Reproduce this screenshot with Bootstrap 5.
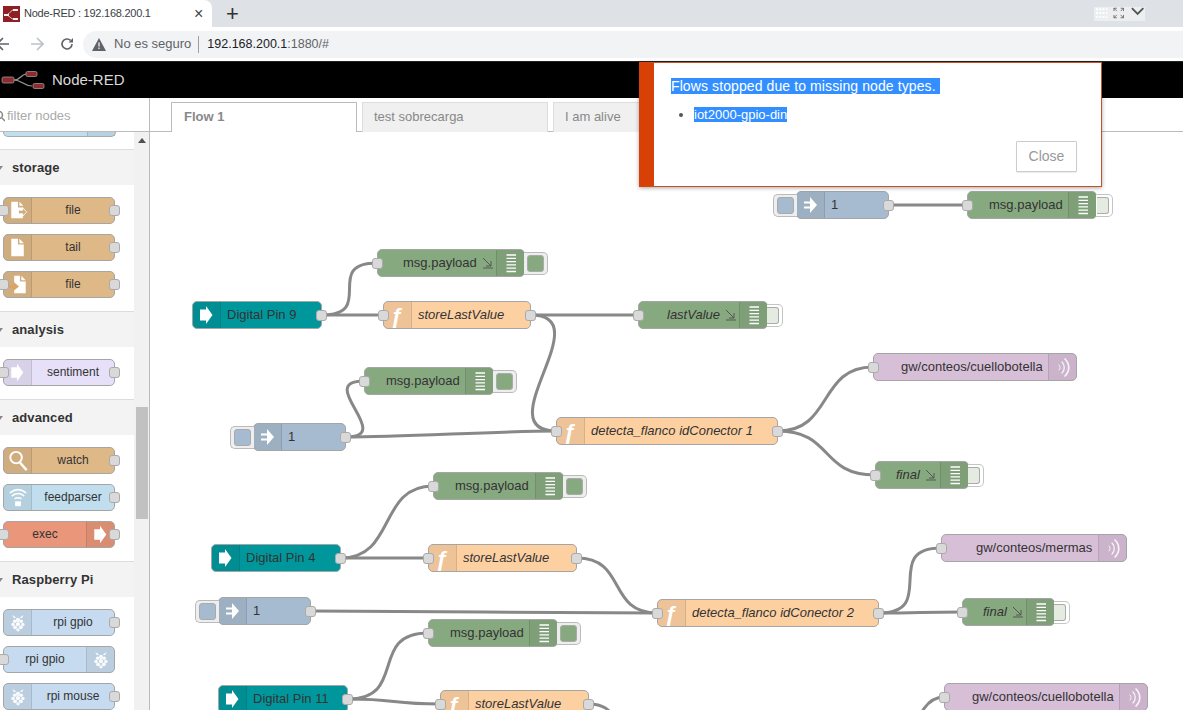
<!DOCTYPE html>
<html lang="es">
<head>
<meta charset="utf-8">
<title>Node-RED : 192.168.200.1</title>
<link href="https://cdn.jsdelivr.net/npm/bootstrap@5.3.0/dist/css/bootstrap.min.css" rel="stylesheet">
<style>
html,body{height:710px;overflow:hidden}
body{font-family:"Liberation Sans",Arial,sans-serif;font-size:13px;color:#333;background:#fff}
.shell{height:710px}
.br-tabs{height:27px;background:#dee1e6;flex:none}
.br-tab{width:212px;height:27px;background:#fff;border-top-right-radius:8px;padding-left:3px;font-size:11px;letter-spacing:-.25px;color:#3c4043}
.br-tab .ttl{margin-left:4px;width:170px}
.br-x{font-size:16px;color:#444;line-height:1}
.br-plus{font-size:22px;color:#333;line-height:1;margin-left:14px;font-weight:400}
.win-ctl{width:51px;height:14px;background:#eceef0;gap:5px;margin-right:38px;padding-left:1px}
.br-bar{height:34px;background:#fff;flex:none}
.br-navs{width:83px;flex:none}
.omni{height:27px;background:#f1f3f4;border-radius:14px 0 0 14px;padding-left:9px;font-size:13px;color:#5f6368}
.omni .sep{width:1px;height:17px;background:#9aa0a6;margin:0 8px 0 7px}
.omni .url{font-size:12.5px}
.omni .host{color:#202124}
.nr-head{height:37px;background:#000;color:#d9d9d9;font-size:15px;flex:none;padding-left:1px;border-top:1px solid #222}
.nr-head svg{margin-right:7px}
.nr-main{min-height:0}
.palette{width:150px;flex:none;border-right:1px solid #bbb;background:#fff}
.pal-filter{height:34px;flex:none;border-bottom:1px solid #bbb;color:#aaa;font-size:13px;padding:3px 0 0 7px;position:relative}
.pal-filter svg{position:absolute;left:-7px;top:12px}
.pal-body{min-height:0}
.pal-list{width:134px;flex:none;overflow:hidden}
.pal-bar{width:15px;flex:none;background:#f1f1f1}
.pal-arrow{width:0;height:0;border:4px solid transparent;border-top:0;border-bottom:5px solid #505050;margin:6px auto 0}
.pal-thumb{width:12px;height:112px;background:#c1c1c1;margin:264px auto 0}
.pal-stub{height:5px;margin:0 18px -1px 3px;background:#c0deed;border:1px solid #aaa;border-top:0;border-radius:0 0 5px 5px;display:flex;justify-content:flex-end}
.pal-stub i{width:28px;background:rgba(0,0,0,.05);border-left:1px solid rgba(0,0,0,.12)}
.pal-cat{height:36px;background:#f3f3f3;border-top:1px solid #ddd;margin-top:13px;font-weight:700;font-size:13px;color:#333;padding-left:12px;letter-spacing:.1px;position:relative}
.pal-cat::before{content:"";position:absolute;left:-3px;top:16px;border:3px solid transparent;border-top:4px solid #888;border-bottom:0}
.pal-items{padding:12px 0 0 3px;display:flex;flex-direction:column;gap:10px}
.pal-items .rn{width:112px;height:27px;font-size:12px;position:relative;text-align:center}
.pal-items .rn .lbl{flex:1;padding:0;text-align:center;line-height:25px}
.pal-items .ic svg{height:25px}
.rn{display:flex;border:1px solid #a5a5a5;border-radius:5px;color:#333;white-space:nowrap}
.abs{position:absolute;height:28px;z-index:2;font-size:13px}
.abs .lbl{line-height:26px;flex:1;overflow:visible}
.ic{width:28px;flex:none;background:rgba(0,0,0,.06);border-right:1px solid rgba(0,0,0,.1);display:flex;align-items:center;justify-content:center;border-radius:4px 0 0 4px}
.ic.rt{border-right:0;border-left:1px solid rgba(0,0,0,.1);border-radius:0 4px 4px 0}
.ic svg{width:26px;height:26px;display:block}
.ffn{color:#fff;font-size:22px;font-weight:700;line-height:25px;margin-left:-1px}
.pt{position:absolute;top:50%;width:11px;height:11px;margin-top:-5.5px;background:#d9d9d9;border:1px solid #aaa;border-radius:3px;z-index:3}
.pt.l{left:-6px}.pt.r{right:-6px}
.c-file{background:#deb887}.c-sent{background:#e6e0f8}.c-feed{background:#c0deed}.c-exec{background:#e9967a}.c-rpi{background:#c6dbef}
.c-inj{background:#a6bbcf}.c-dbg{background:#87a980}.c-fn{background:#fdd0a2}.c-mq{background:#d8bfd8}.c-pin{background:#00979c}
.nbtn{position:absolute;top:2px;height:23px;background:#eee;border:1px solid #bbb;display:flex;align-items:center}
.nbtn i{display:block;height:17px;border-radius:3px;border:1px solid #aaa}
.nbtn.rb{left:100%;border-left:0;border-radius:0 5px 5px 0;justify-content:flex-end;padding-right:3px}
.nbtn.lb{right:100%;border-right:0;border-radius:5px 0 0 5px;padding-left:3px}
.nbtn.off{background:#fff;border-color:#c4c4c4}
.nbtn.off i{background:#e4ebe1;border-left:0;border-radius:0 3px 3px 0}
.chg{display:inline-block;vertical-align:-2px;margin-left:5px}
.wk-tabs{height:34px;flex:none;background:#fff;border-bottom:1px solid #bbb;padding:4px 0 0 21px;gap:5px;display:flex;flex-wrap:nowrap}
.wk-tab{width:186px;height:30px;background:#f0f0f0;border:1px solid #ddd;border-bottom:0;color:#888;padding:0 11px;line-height:27px;font-size:13px}
.wk-tab.on{background:#fff;border-color:#bbb;font-weight:700;position:relative;z-index:1;padding-left:12px}
.canvas{position:relative;overflow:hidden;background:#fff}
.wires{position:absolute;left:0;top:0;width:1033px;height:578px;z-index:1}
.wires path{fill:none;stroke:#888;stroke-width:3}
.nr-alert{position:absolute;left:639px;top:62px;width:463px;height:125px;background:#fff;border:1px solid #c7502a;border-left:15px solid #d74108;box-shadow:0 1px 4px rgba(0,0,0,.35);z-index:20;padding:14px 16px 0 17px;font-size:14px;color:#555}
.nr-alert .sel{background:#338fff;color:#fff}
.nr-alert .top-msg{line-height:19px;letter-spacing:.1px}
.nr-alert ul{margin:9px 0 0;padding-left:23px;line-height:19px;font-size:13px}
.nr-alert .btn-wrap{position:absolute;right:24px;top:78px}
.nr-close{width:61px;height:31px;padding:0;background:#fff;border:1px solid #ccc;border-radius:1px;color:#999;font-size:14px;box-shadow:0 1px 1px rgba(0,0,0,.08)}
</style>
</head>
<body>
<svg width="0" height="0" class="position-absolute">
<defs>
<symbol id="i-arrow" viewBox="0 0 26 26"><path d="M6 7.500h6V4l6.500 9-6.500 9v-3.500H6z" fill="#fff"/></symbol>
<symbol id="i-inj" viewBox="0 0 26 26"><path d="M6 9.500h6V5l7 8-7 8v-4.500H6v-2h6v-3H6z" fill="#fff"/></symbol>
<symbol id="i-dbg" viewBox="0 0 26 26"><path d="M8.500 5h9.500M8.500 8.300h9.500M8.500 11.600h9.500M8.500 14.900h9.500M8.500 18.200h9.500M8.500 21.500h9.500" stroke="#fff" stroke-width="1.300" fill="none"/></symbol>
<symbol id="i-mq" viewBox="0 0 26 26" ><g fill="none" stroke="#fff" stroke-linecap="round" opacity=".85"><path d="M9 11c1.500 1.500 1.500 3.500 0 5" stroke-width="1"/><path d="M12 8c3 3 3 8 0 11" stroke-width="1.300"/><path d="M15 5c5 5 5 12 0 17" stroke-width="1.700"/></g></symbol>
<symbol id="i-file-in" viewBox="0 0 26 26"><path d="M6 4h7v6h5v3h-4v3h4v5H6z" fill="#fff"/><path d="M14.500 4l4 4h-4z" fill="#fff"/><path d="M15 12.500h3V10l4 4.500-4 4.500v-2.500h-3" fill="none" stroke="#fff" stroke-width=".8"/></symbol>
<symbol id="i-file" viewBox="0 0 26 26"><path d="M6 4h7v6h6v12H6z" fill="#fff"/><path d="M14.500 4l4.500 4.500h-4.500z" fill="#fff"/></symbol>
<symbol id="i-file-out" viewBox="0 0 26 26"><path d="M9 4h6v6h6v12H9z" fill="#fff"/><path d="M16.500 4l4.500 4.500h-4.500z" fill="#fff"/><path d="M3 13.500h5V10l6 5-6 5v-3H3z" fill="#d9a566"/></symbol>
<symbol id="i-watch" viewBox="0 0 26 26"><circle cx="11" cy="10" r="6" fill="none" stroke="#fff" stroke-width="2"/><path d="M15 15l7 8" stroke="#fff" stroke-width="2.500"/></symbol>
<symbol id="i-feed" viewBox="0 0 26 26"><g fill="none" stroke="#fff" stroke-width="1.600" stroke-linecap="round"><path d="M5 8c5-4 11-4 16 0"/><path d="M7 11c4-3 8-3 12 0"/><path d="M10 14c2-1 4-1 6 0"/></g><rect x="10" y="17" width="6" height="5" fill="#fff"/></symbol>
<symbol id="i-rpi" viewBox="0 0 26 26"><g fill="#fff" opacity=".9" transform="translate(1.900 1.900) scale(.85)"><path d="M6 4l5 3-3 1zM20 4l-5 3 3 1z"/><circle cx="13" cy="10" r="2.600"/><circle cx="9" cy="11.500" r="2.200"/><circle cx="17" cy="11.500" r="2.200"/><circle cx="7" cy="15.500" r="2.200"/><circle cx="19" cy="15.500" r="2.200"/><circle cx="13" cy="15" r="2.700"/><circle cx="9.500" cy="19" r="2.400"/><circle cx="16.500" cy="19" r="2.400"/><circle cx="13" cy="22" r="2"/></g></symbol>
</defs>
</svg>

<div class="shell d-flex flex-column">
  <!-- browser tab strip -->
  <div class="br-tabs d-flex align-items-center">
    <div class="br-tab d-flex align-items-center">
      <svg width="17" height="16" viewBox="0 0 17 16"><rect width="17" height="16" fill="#8f1f24"/><path d="M2 9c5 0 5-5 9-5M2 9c5 0 5 4 9 4" stroke="#ddd" fill="none"/><rect x="1" y="8" width="5" height="2" fill="#eee"/><rect x="10" y="3" width="5" height="2" fill="#eee"/><rect x="10" y="12" width="5" height="2" fill="#eee"/></svg>
      <span class="ttl">Node-RED : 192.168.200.1</span>
      <span class="br-x">×</span>
    </div>
    <span class="br-plus">+</span>
    <div class="win-ctl d-flex align-items-start ms-auto">
      <svg width="14" height="14" viewBox="0 0 14 14"><path d="M1 2h12M1 6h12M1 10h12" stroke="#fff" stroke-width="2" stroke-dasharray="2 1.500"/></svg>
      <svg width="12" height="12" viewBox="0 0 12 12"><path d="M1 4V1h3M8 1h3v3M1 8v3h3M11 8v3H8M1 1l3 3M11 1L8 4M1 11l3-3M11 11L8 8" stroke="#555" fill="none" stroke-width=".8"/></svg>
      <svg width="16" height="10" viewBox="0 0 16 10"><path d="M2 1l6 6 6-6" stroke="#555" stroke-width="2" fill="none"/></svg>
    </div>
  </div>
  <!-- address bar -->
  <div class="br-bar d-flex align-items-center">
    <div class="br-navs d-flex align-items-center">
      <svg width="14" height="14" viewBox="0 0 14 14"><path d="M7 1L1 7l6 6M1 7h12" stroke="#5f6368" stroke-width="1.600" fill="none" transform="translate(-4 0)"/></svg>
      <svg width="14" height="14" viewBox="0 0 14 14" class="ms-3"><path d="M7 1l6 6-6 6M13 7H1" stroke="#bdc1c6" stroke-width="1.600" fill="none"/></svg>
      <svg width="14" height="14" viewBox="0 0 14 14" class="ms-3"><path d="M12 7a5 5 0 1 1-1.500-3.600" stroke="#5f6368" stroke-width="1.600" fill="none"/><path d="M13 1v4.500H8.500z" fill="#5f6368"/></svg>
    </div>
    <div class="omni flex-grow-1 d-flex align-items-center">
      <svg width="14" height="13" viewBox="0 0 14 13" class="me-2"><path d="M7 0l7 13H0z" fill="#5f6368"/><path d="M7 4.500v4M7 9.500v1.500" stroke="#f1f3f4" stroke-width="1.300"/></svg>
      <span>No es seguro</span><span class="sep"></span><span class="url"><span class="host">192.168.200.1</span>:1880/#</span>
    </div>
  </div>
  <!-- Node-RED header -->
  <div class="nr-head d-flex align-items-center">
    <svg width="44" height="20" viewBox="0 0 44 20"><g fill="none" stroke="#999" stroke-width="1.200"><path d="M13 10c7 0 6-5 12-6"/><path d="M13 10c8 0 9 6 18 6"/></g><g fill="#8f2a2e" stroke="#999" stroke-width=".8"><rect x="1" y="7" width="12" height="6" rx="1.500"/><rect x="25" y="1.500" width="11" height="5" rx="1.500"/><rect x="32" y="13.500" width="11" height="5" rx="1.500"/></g></svg>
    <span>Node-RED</span>
  </div>

  <div class="nr-main flex-grow-1 d-flex">
    <!-- palette -->
    <aside class="palette d-flex flex-column">
      <div class="pal-filter d-flex align-items-center">
        <svg width="12" height="12" viewBox="0 0 12 12"><circle cx="6" cy="5" r="3.500" fill="none" stroke="#888" stroke-width="1.500"/><path d="M9 8l3 3" stroke="#888" stroke-width="1.500"/></svg>
        <span>filter nodes</span>
      </div>
      <div class="pal-body flex-grow-1 d-flex">
        <div class="pal-list">
          <div class="pal-stub"><i></i></div>
          <div class="pal-cat d-flex align-items-center">storage</div>
          <div class="pal-items">
            <div class="rn c-file"><span class="pt l"></span><span class="ic"><svg><use href="#i-file-in"/></svg></span><span class="lbl">file</span><span class="pt r"></span></div>
            <div class="rn c-file"><span class="ic"><svg><use href="#i-file"/></svg></span><span class="lbl">tail</span><span class="pt r"></span></div>
            <div class="rn c-file"><span class="pt l"></span><span class="ic"><svg><use href="#i-file-out"/></svg></span><span class="lbl">file</span><span class="pt r"></span></div>
          </div>
          <div class="pal-cat d-flex align-items-center">analysis</div>
          <div class="pal-items">
            <div class="rn c-sent"><span class="pt l"></span><span class="ic"><svg><use href="#i-arrow"/></svg></span><span class="lbl">sentiment</span><span class="pt r"></span></div>
          </div>
          <div class="pal-cat d-flex align-items-center">advanced</div>
          <div class="pal-items">
            <div class="rn c-file"><span class="ic"><svg><use href="#i-watch"/></svg></span><span class="lbl">watch</span><span class="pt r"></span></div>
            <div class="rn c-feed"><span class="ic"><svg><use href="#i-feed"/></svg></span><span class="lbl">feedparser</span><span class="pt r"></span></div>
            <div class="rn c-exec"><span class="pt l"></span><span class="lbl">exec</span><span class="ic rt"><svg><use href="#i-arrow"/></svg></span><span class="pt r"></span></div>
          </div>
          <div class="pal-cat d-flex align-items-center">Raspberry Pi</div>
          <div class="pal-items">
            <div class="rn c-rpi"><span class="ic"><svg><use href="#i-rpi"/></svg></span><span class="lbl">rpi gpio</span><span class="pt r"></span></div>
            <div class="rn c-rpi"><span class="pt l"></span><span class="lbl">rpi gpio</span><span class="ic rt"><svg><use href="#i-rpi"/></svg></span></div>
            <div class="rn c-rpi"><span class="ic"><svg><use href="#i-rpi"/></svg></span><span class="lbl">rpi mouse</span><span class="pt r"></span></div>
          </div>
        </div>
        <div class="pal-bar"><div class="pal-arrow"></div><div class="pal-thumb"></div></div>
      </div>
    </aside>

    <!-- workspace -->
    <div class="flex-grow-1 d-flex flex-column" style="min-width:0">
      <div class="wk-tabs">
        <div class="wk-tab on">Flow 1</div>
        <div class="wk-tab">test sobrecarga</div>
        <div class="wk-tab">I am alive</div>
      </div>
      <div class="canvas flex-grow-1" id="cv">
        <svg class="wires" id="wr" viewBox="150 132 1033 578"></svg>
      </div>
    </div>
  </div>
</div>

<!-- notification over the page -->
<div class="nr-alert">
  <div class="top-msg"><span class="sel">Flows stopped due to missing node types.&nbsp;</span></div>
  <ul><li><span class="sel">iot2000-gpio-din</span></li></ul>
  <div class="btn-wrap"><button type="button" class="btn nr-close">Close</button></div>
</div>

<script src="https://cdn.jsdelivr.net/npm/bootstrap@5.3.0/dist/js/bootstrap.bundle.min.js"></script>
<script>
// x, y, right edge, kind, label, label padding, options
var N=[
 [796,191,889,'inj','1',35,{bl:24}],
 [967,191,1097,'dbg','msg.payload',21,{br:17,off:1}],
 [377,249,525,'dbg','msg.payload',25,{br:24,chg:1}],
 [192,301,322,'pin','Digital Pin 9',35],
 [383,301,531,'fn','storeLastValue',35,{it:1}],
 [638,301,768,'dbg','lastValue',28,{br:16,off:1,it:1,chg:1}],
 [364,367,494,'dbg','msg.payload',21,{br:24}],
 [253,423,346,'inj','1',35,{bl:24}],
 [556,417,778,'fn','detecta_flanco idConector 1',35,{it:1}],
 [873,353,1077,'mq','gw/conteos/cuellobotella',27],
 [875,461,969,'dbg','final',20,{br:16,off:1,it:1,chg:1}],
 [433,472,564,'dbg','msg.payload',21,{br:24}],
 [211,544,341,'pin','Digital Pin 4',35],
 [428,544,577,'fn','storeLastValue',35,{it:1}],
 [218,597,311,'inj','1',35,{bl:24}],
 [428,619,558,'dbg','msg.payload',21,{br:24}],
 [218,685,348,'pin','Digital Pin 11',35],
 [440,690,589,'fn','storeLastValue',35,{it:1}],
 [657,599,879,'fn','detecta_flanco idConector 2',35,{it:1}],
 [941,534,1127,'mq','gw/conteos/mermas',34],
 [962,598,1055,'dbg','final',20,{br:16,off:1,it:1,chg:1}],
 [944,683,1148,'mq','gw/conteos/cuellobotella',27]
];
var W=[
 [322,315,377,263,55],[322,315,383,315,25],[531,315,638,315,40],[531,315,556,431,70],
 [346,437,364,381,50],[346,437,556,431,60],[778,431,873,367,55],[778,431,875,475,55],
 [341,558,433,486,55],[341,558,428,558,30],[577,558,657,613,50],[311,611,657,613,80],
 [348,699,428,633,60],[348,699,440,704,50],[879,613,941,548,60],[879,613,962,612,40],
 [889,205,967,205,30],[589,704,640,730,30],[880,770,944,697,35]
];
var chg='<svg class="chg" width="12" height="12" viewBox="0 0 12 12"><path d="M1 1l8 8M9 4v5H4M1 11h10" stroke="#555" fill="none"/></svg>';
var wr=document.getElementById('wr'),cv=document.getElementById('cv'),p='';
W.forEach(function(w){p+='<path d="M'+w[0]+' '+w[1]+'C'+(w[0]+w[4])+' '+w[1]+' '+(w[2]-w[4])+' '+w[3]+' '+w[2]+' '+w[3]+'"/>';});
wr.innerHTML=p;
var h='';
N.forEach(function(n){
 var k=n[3],o=n[6]||{},ic=k=='fn'?'<span class="ffn">ƒ</span>':'<svg><use href="#i-'+(k=='pin'?'arrow':k)+'"/></svg>';
 var right=k=='dbg'||k=='mq';
 var s='<div class="rn abs c-'+k+'" style="left:'+(n[0]-150)+'px;top:'+(n[1]-132)+'px;width:'+(n[2]-n[0])+'px">';
 if(k!='inj'&&k!='pin')s+='<span class="pt l"></span>';
 if(o.bl)s+='<span class="nbtn lb" style="width:'+o.bl+'px"><i class="c-inj" style="width:17px"></i></span>';
 if(!right)s+='<span class="ic">'+ic+'</span>';
 var pad=right?n[5]:n[5]-29;
 s+='<span class="lbl'+(o.it?' fst-italic':'')+'" style="padding-left:'+pad+'px">'+n[4]+(o.chg?chg:'')+'</span>';
 if(right)s+='<span class="ic rt">'+ic+'</span>';
 if(k!='dbg'&&k!='mq')s+='<span class="pt r"></span>';
 if(o.br)s+='<span class="nbtn rb'+(o.off?' off':'')+'" style="width:'+o.br+'px"><i class="c-dbg" style="width:'+(o.br>20?17:12)+'px"></i></span>';
 s+='</div>';
 h+=s;
});
cv.insertAdjacentHTML('beforeend',h);
</script>
</body>
</html>
